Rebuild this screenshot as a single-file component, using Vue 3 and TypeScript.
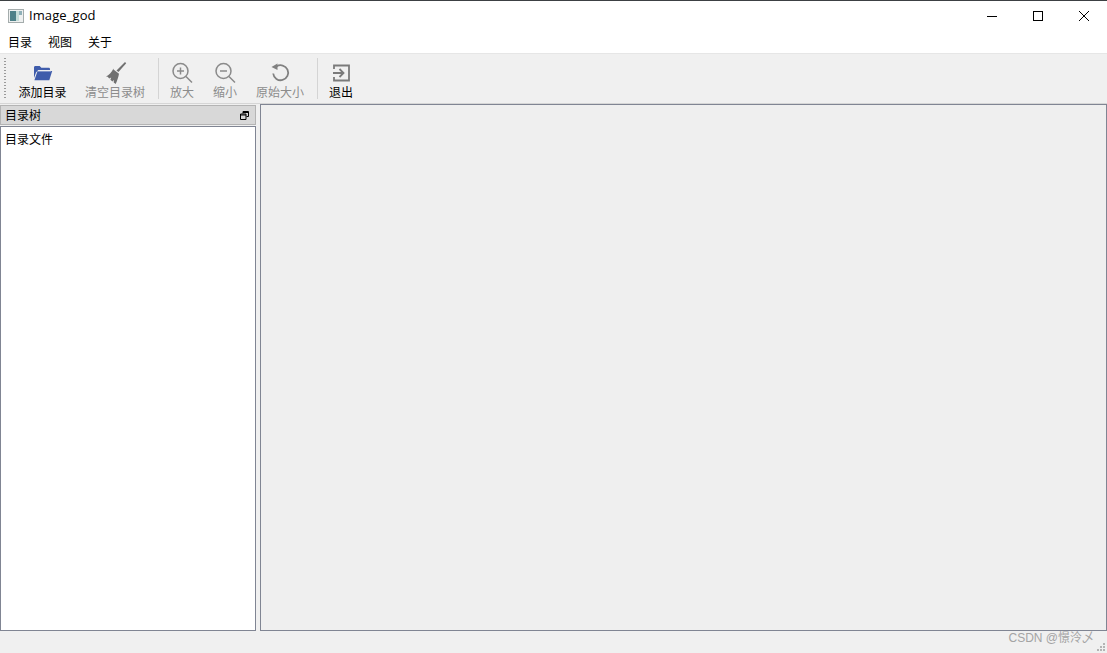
<script setup lang="ts">
interface ToolItem {
  label: string
  icon: string
  disabled?: boolean
  width: number
}

const menus = ['目录', '视图', '关于']

const firstGroup: ToolItem[] = [
  { label: '添加目录', icon: 'folder', width: 61 },
  { label: '清空目录树', icon: 'broom', disabled: true, width: 72 },
]
const secondGroup: ToolItem[] = [
  { label: '放大', icon: 'zoomin', disabled: true, width: 36 },
  { label: '缩小', icon: 'zoomout', disabled: true, width: 36 },
  { label: '原始大小', icon: 'reset', disabled: true, width: 60 },
]
const thirdGroup: ToolItem[] = [{ label: '退出', icon: 'exit', width: 36 }]
const groups = [firstGroup, secondGroup, thirdGroup]
</script>

<template>
  <div class="window">
    <header class="titlebar">
      <svg class="app-icon" width="16" height="16" viewBox="0 0 16 16">
        <rect x="0.5" y="1.5" width="15" height="13" fill="#eef0f0" stroke="#a4acac" />
        <rect x="2" y="3" width="6" height="10" fill="#4d8088" />
        <rect x="8" y="3" width="3" height="10" fill="#c4dcd8" />
        <rect x="11" y="3" width="3" height="4" fill="#8fb0b8" />
      </svg>
      <span class="app-name">Image_god</span>
      <div class="win-buttons">
        <button class="win-btn">
          <svg width="10" height="10" viewBox="0 0 10 10"><path d="M0 5.5h10" stroke="#000" fill="none" /></svg>
        </button>
        <button class="win-btn">
          <svg width="10" height="10" viewBox="0 0 10 10"><rect x="0.5" y="0.5" width="9" height="9" stroke="#000" fill="none" /></svg>
        </button>
        <button class="win-btn">
          <svg width="10" height="10" viewBox="0 0 10 10"><path d="M0 0l10 10M10 0L0 10" stroke="#000" stroke-width="1" fill="none" /></svg>
        </button>
      </div>
    </header>

    <nav class="menubar">
      <span v-for="m in menus" :key="m" class="menu-item">{{ m }}</span>
    </nav>

    <div class="toolbar">
      <div class="grip"></div>
      <template v-for="(group, i) in groups" :key="i">
        <div v-if="i > 0" class="tool-sep"></div>
        <div class="tool-group" :class="{ 'tool-group--first': i === 0 }">
          <div
            v-for="item in group"
            :key="item.label"
            class="tool"
            :class="{ 'tool--off': item.disabled }"
            :style="{ width: item.width + 'px' }"
          >
            <svg class="tool-icon" width="24" height="24" viewBox="0 0 24 24">
              <template v-if="item.icon === 'folder'">
                <path d="M3 6.5C3 5.5 3.6 5 4.5 5h4.2l1.6 1.8h7.2c.9 0 1.5.5 1.5 1.4V9H7.2L5 11.5 3 17z" fill="#3f5cab" />
                <path d="M6.6 10h14.6l-2.9 9.2H3.4z" fill="#3f5cab" />
                <path d="M7 10.2h13" stroke="#dfe3ee" stroke-width="0.6" fill="none" />
              </template>
              <template v-else-if="item.icon === 'broom'">
                <path d="M22 1l1.200 1.200-7.700 8.800-2-1.600z" fill="#707070" />
                <path d="M10.500 8.500l5.500 4.200c-.5 3-1.800 6.800-3.300 10.300l-2-1.600 .2-2.400-1.500 1.500-2-1.700 .8-2.300-2 1.100-1.500-1.800-1.700-.4c3-1.300 5.500-3.800 7.500-7.900z" fill="#707070" />
              </template>
              <template v-else-if="item.icon === 'zoomin'">
                <circle cx="10.500" cy="10" r="7.500" fill="none" stroke="#8a8a8a" stroke-width="1.500" />
                <path d="M16 15.500l6 6M10.500 6.500v7M7 10h7" fill="none" stroke="#8a8a8a" stroke-width="1.500" />
              </template>
              <template v-else-if="item.icon === 'zoomout'">
                <circle cx="10.500" cy="10" r="7.500" fill="none" stroke="#8a8a8a" stroke-width="1.500" />
                <path d="M16 15.500l6 6M7 10h7" fill="none" stroke="#8a8a8a" stroke-width="1.500" />
              </template>
              <template v-else-if="item.icon === 'reset'">
                <path d="M8.500 5.500A7.500 7.500 0 1 1 5.200 12.500" fill="none" stroke="#808080" stroke-width="1.800" />
                <path d="M9.500 2.500v6.500L3.500 6z" fill="#808080" />
              </template>
              <template v-else>
                <path d="M5 8V4.500h15v15H5V16" fill="none" stroke="#7a7a7a" stroke-width="1.800" />
                <path d="M4 12h10M10.500 8l4 4-4 4" fill="none" stroke="#7a7a7a" stroke-width="1.800" />
              </template>
            </svg>
            <span class="tool-label">{{ item.label }}</span>
          </div>
        </div>
      </template>
    </div>

    <main class="body">
      <aside class="dock">
        <div class="dock-title">
          <span>目录树</span>
          <svg width="9" height="9" viewBox="0 0 9 9">
            <path d="M3 2.500V.5h5.500v5H6.500M.5 3h5.500v5.500H.5z" fill="none" stroke="#000" />
            <path d="M3 1.500h5.500M.5 4h5.500" stroke="#000" fill="none" />
          </svg>
        </div>
        <div class="tree">目录文件</div>
      </aside>
      <section class="viewer"></section>
    </main>

    <footer class="statusbar">
      <span class="watermark">CSDN @憬泠乄</span>
      <svg class="size-grip" width="9" height="9" viewBox="0 0 9 9">
        <path d="M6 0h2v2H6zM3 3h2v2H3zM6 3h2v2H6zM0 6h2v2H0zM3 6h2v2H3zM6 6h2v2H6z" fill="#b4b4b4" />
      </svg>
    </footer>
  </div>
</template>

<style>
html,
body {
  margin: 0;
  overflow: hidden;
}
</style>

<style scoped>
.window {
  display: flex;
  flex-direction: column;
  width: 1107px;
  height: 653px;
  background: #f0f0f0;
  border-top: 1px solid #3c4043;
  box-sizing: border-box;
  font-family: "Noto Sans CJK SC", "Liberation Sans", sans-serif;
  font-size: 12px;
  color: #000;
  overflow: hidden;
}

/* Title bar */
.titlebar {
  display: flex;
  align-items: center;
  height: 29px;
  padding-left: 8px;
  background: #fff;
  flex-shrink: 0;
}

.app-icon {
  margin-right: 5px;
}

.app-name {
  margin-bottom: 1px;
  font-family: "Open Sans", "Liberation Sans", sans-serif;
  font-size: 13px;
  letter-spacing: 0.1px;
}

.win-buttons {
  display: flex;
  margin-left: auto;
}

.win-btn {
  display: flex;
  align-items: center;
  justify-content: center;
  width: 46px;
  height: 29px;
  padding: 0;
  border: 0;
  background: transparent;
}

/* Menu bar */
.menubar {
  display: flex;
  align-items: center;
  gap: 16px;
  height: 23px;
  padding-left: 8px;
  background: #fff;
  border-bottom: 1px solid #e6e6e6;
  flex-shrink: 0;
}

.menu-item {
  line-height: 23px;
}

/* Toolbar */
.toolbar {
  display: flex;
  align-items: center;
  height: 49px;
  padding-left: 4px;
  background: #f0f0f0;
  border-bottom: 1px solid #d6d6d6;
  flex-shrink: 0;
}

.grip {
  width: 2px;
  height: 43px;
  margin-right: 6px;
  background-image: radial-gradient(circle, #9a9a9a 0.8px, transparent 1px);
  background-size: 2px 3px;
}

.tool-group {
  display: flex;
  gap: 7px;
}

.tool-group--first {
  gap: 6px;
}

.tool-sep {
  width: 1px;
  height: 41px;
  margin: 0 5px 0 7px;
  background: #d4d4d4;
}

.tool {
  display: flex;
  flex-direction: column;
  align-items: center;
  height: 46px;
  padding-top: 5px;
  box-sizing: border-box;
}

.tool-icon {
  display: block;
  flex-shrink: 0;
}

.tool-label {
  margin-top: -2px;
  line-height: 18px;
  white-space: nowrap;
}

.tool--off .tool-label {
  color: #8c8c8c;
}

/* Main area */
.body {
  display: flex;
  flex: 1;
  min-height: 0;
  gap: 4px;
}

.dock {
  display: flex;
  flex-direction: column;
  width: 256px;
  margin-top: 1px;
  flex-shrink: 0;
}

.dock-title {
  display: flex;
  align-items: center;
  justify-content: space-between;
  height: 20px;
  padding: 0 6px 2px 4px;
  background: #d8d8d8;
  border: 1px solid #b4b4b4;
  box-sizing: border-box;
}

.dock-title svg {
  margin-top: 2px;
}

.tree {
  flex: 1;
  margin-top: 1px;
  padding: 3px 4px;
  background: #fff;
  border: 1px solid #808593;
  box-sizing: border-box;
  line-height: 17px;
}

.viewer {
  flex: 1;
  background: #efefef;
  border: 1px solid #808593;
  box-sizing: border-box;
}

/* Status bar */
.statusbar {
  position: relative;
  height: 22px;
  flex-shrink: 0;
  background: #f0f0f0;
}

.watermark {
  position: absolute;
  right: 13px;
  top: -1px;
  font-family: "Liberation Sans", "Noto Sans CJK SC", sans-serif;
  font-size: 12px;
  line-height: 16px;
  color: #a4a4a4;
}

.size-grip {
  position: absolute;
  right: 1px;
  bottom: 1px;
}
</style>
